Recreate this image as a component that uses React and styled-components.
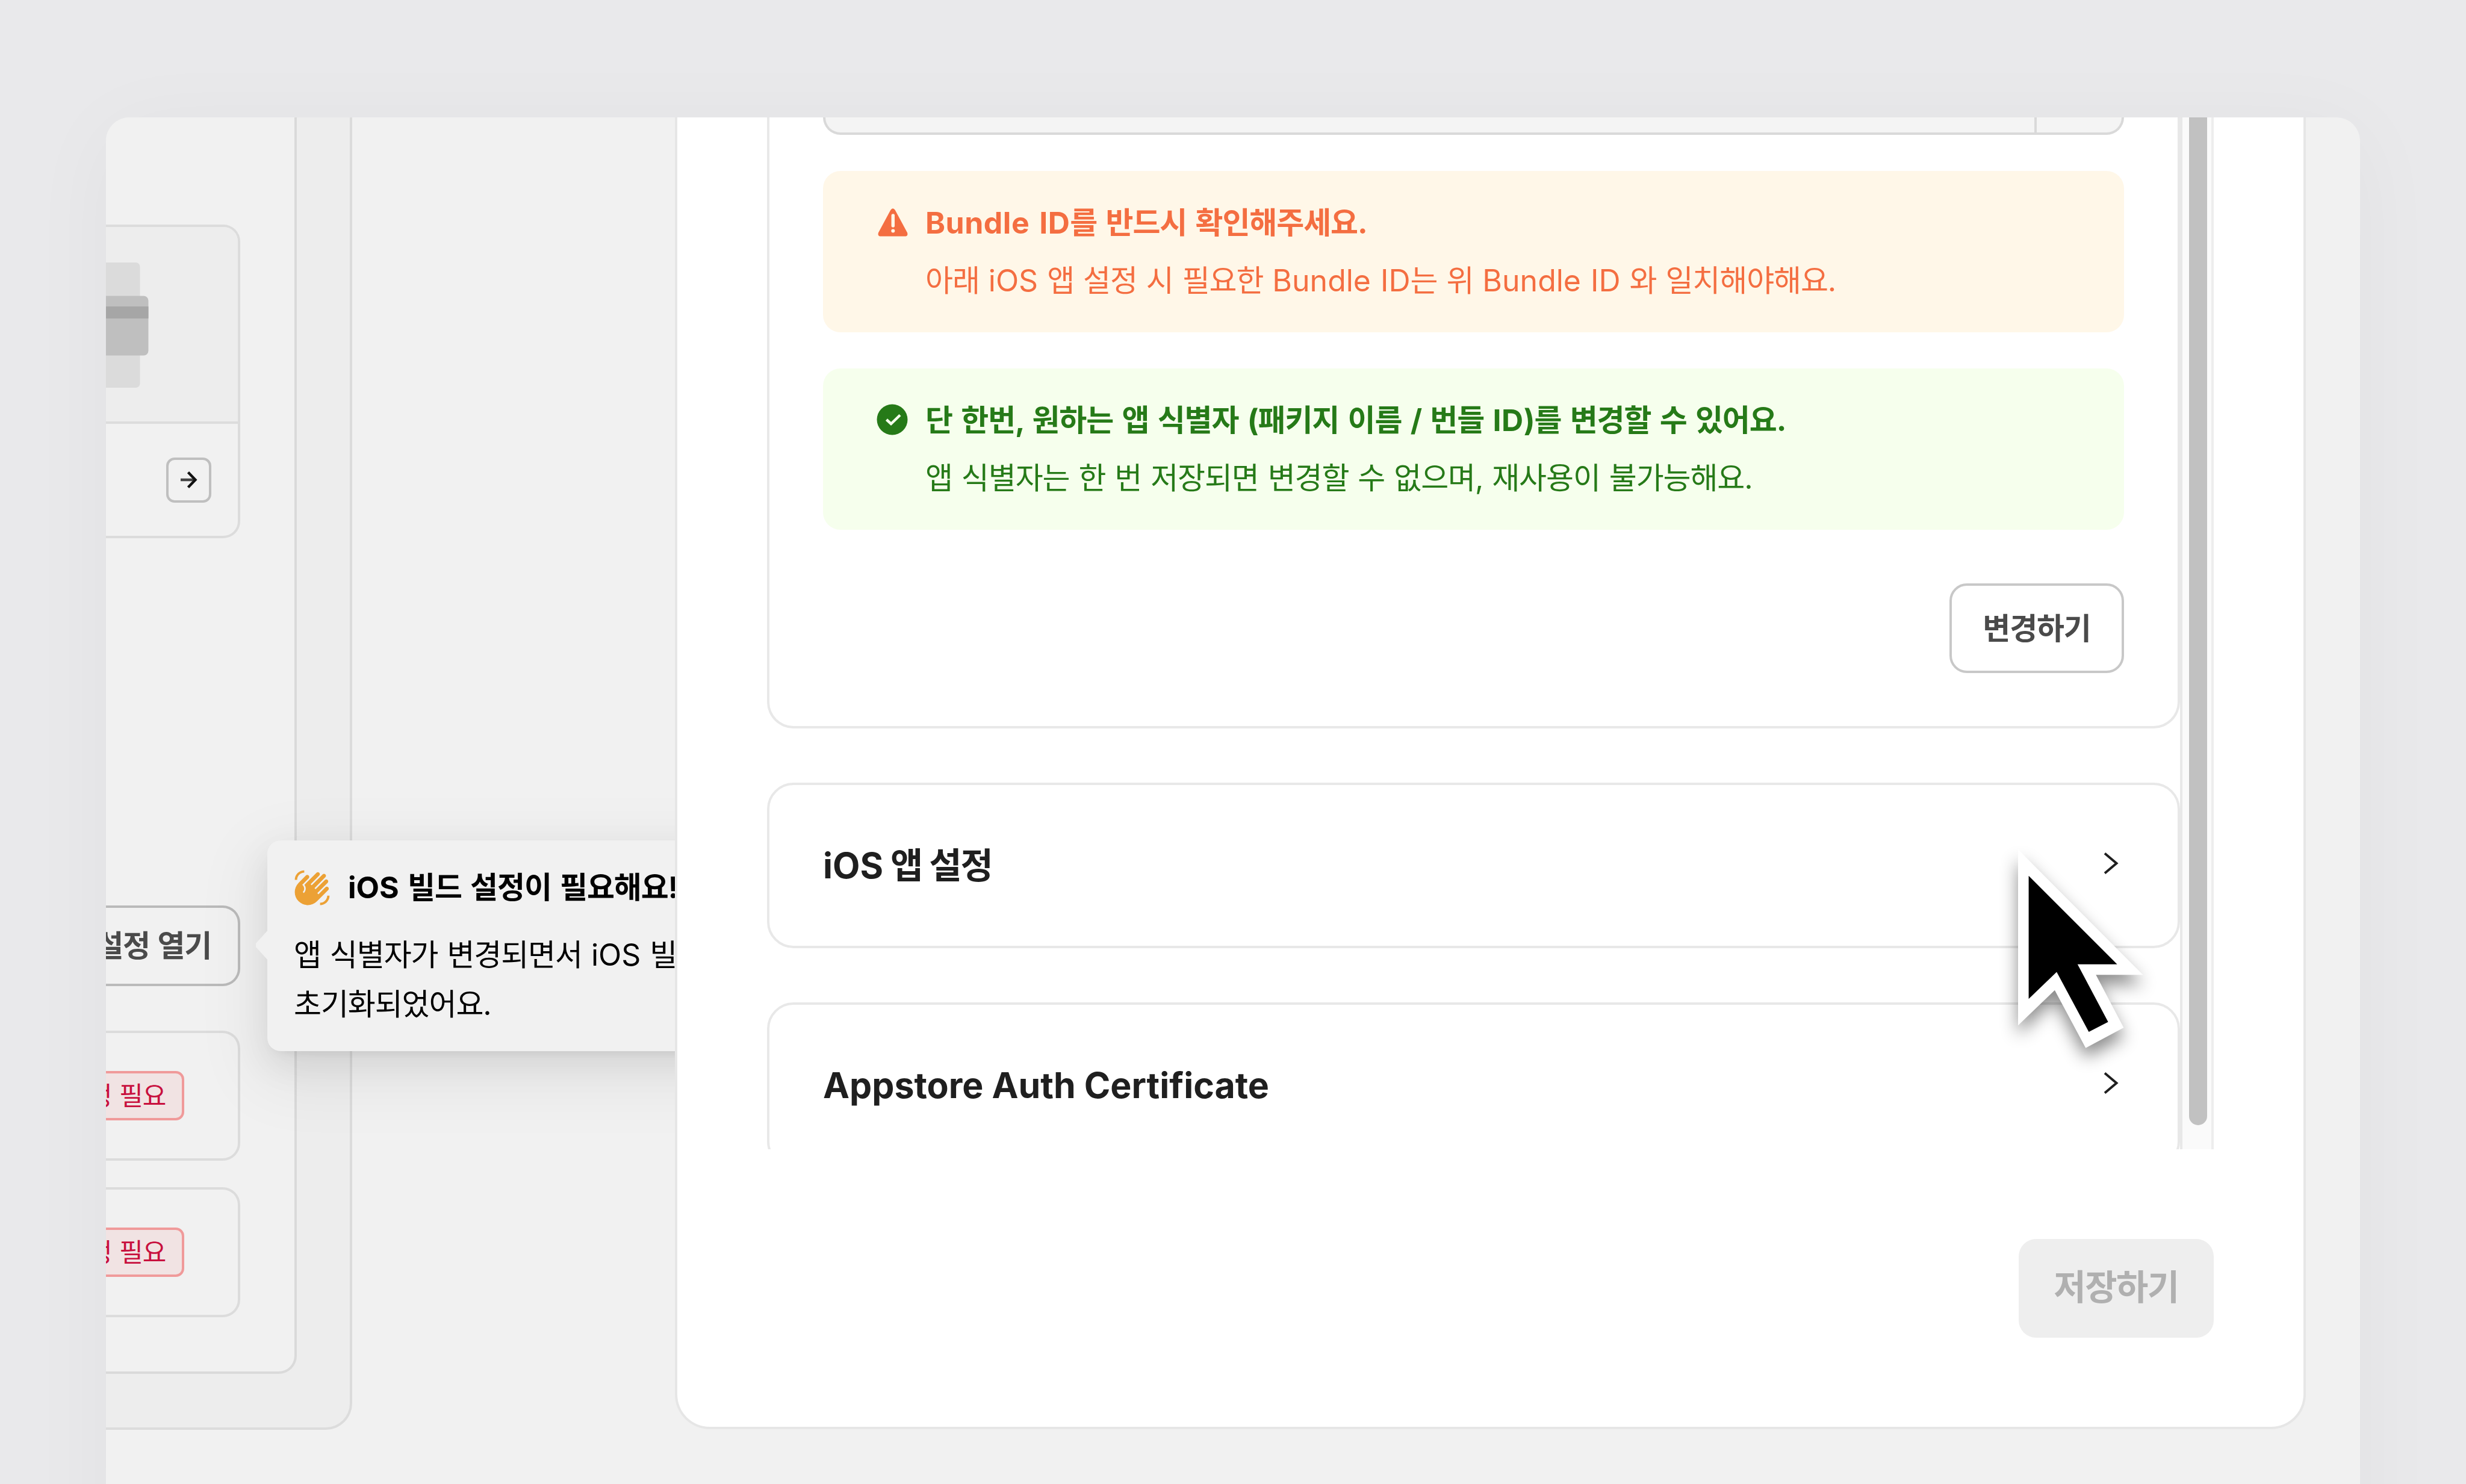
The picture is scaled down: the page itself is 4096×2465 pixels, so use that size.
import React from 'react'
import styled, { createGlobalStyle } from 'styled-components'
import { MdWavingHand } from 'react-icons/md'

const App = () => {
    return (
        <>
            <GlobalStyle />
            <Stage>
                <Window>
                    <Sidebar>
                        <SidebarInner>
                            <AppCard>
                                <AppPreview>
                                    <svg width="72" height="208" viewBox="0 0 72 208">
                                        <rect x="-40" y="0" width="96.5" height="208" rx="7" fill="#dbdbdb" />
                                        <rect x="-40" y="55.5" width="110.5" height="99" rx="8" fill="#bfbfbf" />
                                        <rect x="-40" y="73" width="110.5" height="20" fill="#a6a6a6" />
                                    </svg>
                                </AppPreview>
                                <AppFooter>
                                    <ArrowButton>
                                        <svg width="32" height="32" viewBox="0 0 32 32" fill="none">
                                            <path d="M2 16H27" stroke="#444" strokeWidth="4.6" />
                                            <path d="M14.5 3.5L26.5 16L14.5 28.5" stroke="#111" strokeWidth="4.4" />
                                        </svg>
                                    </ArrowButton>
                                </AppFooter>
                            </AppCard>
                            <OpenButton>설정 열기</OpenButton>
                            <BuildRow><Tag>설정 필요</Tag></BuildRow>
                            <BuildRow><Tag>설정 필요</Tag></BuildRow>
                        </SidebarInner>
                    </Sidebar>

                    <Tooltip>
                        <TooltipTitle>
                            <MdWavingHand />
                            <span><Latin>iOS</Latin> 빌드 설정이 필요해요!</span>
                        </TooltipTitle>
                        <TooltipBody>
                            앱 식별자가 변경되면서 <Latin>iOS</Latin> 빌드 설정이<br />
                            초기화되었어요.
                        </TooltipBody>
                    </Tooltip>

                    <Modal>
                        <ScrollArea>
                            <Cards>
                                <BundleCard>
                                    <InputGroup>
                                        <InputAddon />
                                    </InputGroup>
                                    <Alert $bg="#fff7e8" $color="#f46e41">
                                        <svg width="52" height="52" viewBox="0 0 52 52">
                                            <path d="M23.2 6Q27 0.5 30.8 6L51 43.5Q52.5 48.5 48.5 49.5H5.5Q1.5 48.5 3 43.5Z" fill="currentColor" />
                                            <path d="M27.3 15V32" stroke="#fff7e8" strokeWidth="5.5" strokeLinecap="round" />
                                            <circle cx="27.3" cy="40.5" r="3" fill="#fff7e8" />
                                        </svg>
                                        <div>
                                            <AlertTitle><Latin $tracking="0.5px">Bundle ID</Latin>를 반드시 확인해주세요.</AlertTitle>
                                            <AlertText>
                                                아래 <Latin>iOS</Latin> 앱 설정 시 필요한 <Latin>Bundle ID</Latin>는 위 <Latin>Bundle ID</Latin> 와 일치해야해요.
                                            </AlertText>
                                        </div>
                                    </Alert>
                                    <Alert $bg="#f6ffed" $color="#267a18">
                                        <svg width="52" height="52" viewBox="0 0 52 52">
                                            <circle cx="26" cy="26" r="25.5" fill="currentColor" />
                                            <path d="M16.5 26L24 33L39 18.5" fill="none" stroke="#f6ffed" strokeWidth="4.5" />
                                        </svg>
                                        <div>
                                            <AlertTitle>단 한번, 원하는 앱 식별자 (패키지 이름 / 번들 <Latin $tracking="0.5px">ID</Latin>)를 변경할 수 있어요.</AlertTitle>
                                            <AlertText>앱 식별자는 한 번 저장되면 변경할 수 없으며, 재사용이 불가능해요.</AlertText>
                                        </div>
                                    </Alert>
                                    <ChangeButton>변경하기</ChangeButton>
                                </BundleCard>
                                <AccordionCard>
                                    <h3><Latin>iOS</Latin> 앱 설정</h3>
                                    <Chevron />
                                </AccordionCard>
                                <AccordionCard>
                                    <h3><Latin>Appstore Auth Certificate</Latin></h3>
                                    <Chevron />
                                </AccordionCard>
                            </Cards>
                            <ScrollTrack>
                                <ScrollThumb />
                            </ScrollTrack>
                        </ScrollArea>
                        <SaveButton disabled>저장하기</SaveButton>
                    </Modal>

                    <Cursor width="208" height="330" viewBox="0 0 208 330">
                        <path d="M0 0L207.4 208.2H129.3L175.4 296.1L112.3 329.7L60.9 233.8L0 292.2Z" fill="#fff" />
                        <path d="M17.6 43.7L164.6 190.8H98.8L149.6 286.5L117.5 303.1L64.1 203.4L17.6 248.3Z" fill="#000" />
                    </Cursor>
                </Window>
            </Stage>
        </>
    )
}

const Chevron = () => (
    <svg width="27" height="38" viewBox="0 0 27 38" fill="none" stroke="#1f1f1f" strokeWidth="4">
        <path d="M3 2.5L22.5 19L3 35.5" />
    </svg>
)

const GlobalStyle = createGlobalStyle`
* {
    box-sizing: border-box;
}
body {
    margin: 0;
    background: #e9e9eb;
    overflow: hidden;
    font-family: Inter, "Noto Sans CJK KR", sans-serif;
}
button {
    font-family: inherit;
}
h3, p {
    margin: 0;
}
`

/* latin words keep their own tracking beside the tightened hangul */
const Latin = styled.span`
letter-spacing: ${({ $tracking }) => $tracking || '0'};
`

const Stage = styled.div`
width: 4096px;
height: 2465px;
padding: 195px 176px 0;
overflow: hidden;
background: #e9e9eb;
`

const Window = styled.div`
position: relative;
display: flex;
align-items: flex-start;
justify-content: space-between;
width: 3744px;
height: 2400px;
padding-right: 90px;
border-radius: 39px;
overflow: hidden;
background: #f1f1f1;
box-shadow: 0 20px 150px rgba(0, 0, 0, 0.04);
`

const Sidebar = styled.div`
width: 409px;
height: 2180px;
border-right: 4px solid #dcdcdc;
border-bottom: 4px solid #dcdcdc;
border-radius: 0 0 44px 0;
background: #ededed;
`

const SidebarInner = styled.div`
display: flex;
flex-direction: column;
width: 317px;
height: 2087px;
padding: 178px 90px 0 0;
border-right: 4px solid #dadada;
border-bottom: 4px solid #dadada;
border-radius: 0 0 30px 0;
background: #f1f1f1;
`

const AppCard = styled.div`
height: 521px;
flex-shrink: 0;
margin-bottom: 610px;
border: 4px solid #dcdcdc;
border-left: none;
border-radius: 0 28px 28px 0;
overflow: hidden;
`

const AppPreview = styled.div`
height: 327px;
padding-top: 59px;
border-bottom: 4px solid #dcdcdc;
background: #ededed;
`

const AppFooter = styled.div`
display: flex;
align-items: center;
justify-content: flex-end;
height: 186px;
padding-right: 44px;
`

const ArrowButton = styled.div`
display: flex;
align-items: center;
justify-content: center;
width: 75px;
height: 75px;
border: 4px solid #bfbfbf;
border-radius: 14px;
`

const OpenButton = styled.div`
display: flex;
flex-shrink: 0;
align-items: center;
justify-content: flex-end;
height: 134px;
margin-bottom: 74px;
padding-right: 44px;
border: 4px solid #bababa;
border-left: none;
border-radius: 0 29px 29px 0;
font-size: 50px;
font-weight: 700;
line-height: 60px;
letter-spacing: -1.2px;
word-spacing: 2px;
white-space: nowrap;
color: #4a4a4a;
`

const BuildRow = styled.div`
display: flex;
flex-shrink: 0;
align-items: center;
justify-content: flex-end;
height: 216px;
margin-bottom: 44px;
padding-right: 89px;
border: 4px solid #dcdcdc;
border-left: none;
border-radius: 0 29px 29px 0;
`

const Tag = styled.span`
display: flex;
flex-shrink: 0;
align-items: center;
height: 82px;
padding: 0 27px 0 26px;
border: 4px solid #f09a9a;
border-radius: 14px;
background: #f1e3e3;
font-size: 43px;
line-height: 52px;
letter-spacing: -1.2px;
word-spacing: 2px;
white-space: nowrap;
color: #c8103e;
`

const Tooltip = styled.div`
position: absolute;
left: 268px;
top: 1201px;
width: 1000px;
height: 350px;
padding: 37px 43px 0;
border-radius: 22px;
background: #f1f1f1;
box-shadow: 0 22px 59px rgba(0, 0, 0, 0.08), 0 11px 22px -15px rgba(0, 0, 0, 0.12), 0 33px 104px 30px rgba(0, 0, 0, 0.05);
font-size: 50px;
line-height: 82px;
letter-spacing: -1.1px;
word-spacing: 2px;
color: #000;
&::before {
    content: "";
    position: absolute;
    left: -19px;
    top: 149px;
    width: 20px;
    height: 50px;
    background: #f1f1f1;
    clip-path: polygon(100% 0, 0 44%, 0 56%, 100% 100%);
}
`

const TooltipTitle = styled.div`
display: flex;
align-items: center;
gap: 28px;
margin-bottom: 30px;
font-weight: 700;
word-spacing: 3.5px;
white-space: nowrap;
svg {
    width: 63px;
    height: 63px;
    color: #eca135;
}
`

const TooltipBody = styled.p`
padding-left: 1px;
`

const Modal = styled.div`
position: relative;
display: flex;
flex-direction: column;
align-items: flex-end;
width: 2709px;
height: 2179px;
padding: 0 149px;
border: 4px solid #e6e6e6;
border-top: none;
border-radius: 0 0 58px 58px;
background: #fff;
`

const ScrollArea = styled.div`
display: flex;
width: 100%;
height: 1714px;
flex-shrink: 0;
margin-bottom: 149px;
overflow: hidden;
`

const Cards = styled.div`
display: flex;
flex: 1;
flex-direction: column;
gap: 90px;
`

const BundleCard = styled.div`
display: flex;
flex-direction: column;
flex-shrink: 0;
gap: 60px;
height: 1015px;
padding: 0 89px;
border: 4px solid #e8e8e8;
border-top: none;
border-radius: 0 0 44px 44px;
`

const InputGroup = styled.div`
display: flex;
justify-content: flex-end;
height: 29px;
border: 4px solid #d9d9d9;
border-top: none;
border-radius: 0 0 29px 29px;
background: #f4f4f4;
overflow: hidden;
`

const InputAddon = styled.div`
width: 145px;
border-left: 4px solid #d9d9d9;
`

const Alert = styled.div`
display: flex;
gap: 29px;
height: 268px;
padding: 38px 89px 0;
border-radius: 29px;
background: ${({ $bg }) => $bg};
color: ${({ $color }) => $color};
font-size: 50px;
line-height: 96px;
letter-spacing: -1.1px;
word-spacing: 2px;
white-space: nowrap;
svg {
    margin-top: 21px;
}
`

const AlertTitle = styled.p`
font-weight: 700;
word-spacing: 3.6px;
`

const AlertText = styled.p`
font-weight: 400;
`

const ChangeButton = styled.button`
align-self: flex-end;
width: 290px;
height: 149px;
margin-top: 29px;
border: 4px solid #c8c8c8;
border-radius: 29px;
background: #fff;
font-size: 50px;
font-weight: 700;
line-height: 60px;
letter-spacing: -1.15px;
color: #4a4a4a;
`

const AccordionCard = styled.div`
display: flex;
flex-shrink: 0;
align-items: center;
justify-content: space-between;
height: 275px;
padding: 0 97px 0 89px;
border: 4px solid #e8e8e8;
border-radius: 44px;
h3 {
    font-size: 59px;
    font-weight: 700;
    line-height: 80px;
    letter-spacing: -2px;
    color: #1f1f1f;
}
svg {
    margin-bottom: 8px;
}
`

const ScrollTrack = styled.div`
width: 56px;
height: 1714px;
padding-left: 11px;
border-left: 4px solid #e8e8e8;
border-right: 4px solid #ededed;
background: #fafafa;
`

const ScrollThumb = styled.div`
width: 30px;
height: 1674px;
border-radius: 0 0 15px 15px;
background: #c1c1c1;
`

const SaveButton = styled.button`
width: 324px;
height: 164px;
flex-shrink: 0;
padding: 0 0 5px;
border: none;
border-radius: 29px;
background: #eee;
font-size: 58px;
font-weight: 700;
line-height: 70px;
letter-spacing: -1.5px;
color: #b0b0b0;
`

const Cursor = styled.svg`
position: absolute;
left: 3176px;
top: 1216px;
filter: drop-shadow(0 16px 14px rgba(0, 0, 0, 0.45));
overflow: visible;
`

export default App
